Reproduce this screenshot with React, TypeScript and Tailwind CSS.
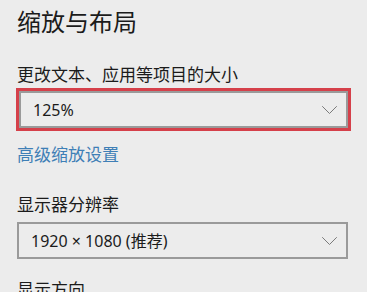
const FONT = "font-['Noto_Sans','Noto_Sans_CJK_SC',sans-serif]";

export default function App() {
  return (
    <div className={`w-[367px] h-[292px] overflow-hidden bg-[#ececec] pl-[17px] pt-[6px] text-[#1b1b1b] ${FONT}`}>
      <h1 className="text-[24px] leading-[32px] font-normal">缩放与布局</h1>

      <p className="mt-[25px] text-[17px] leading-[24px]">更改文本、应用等项目的大小</p>
      <div className="mt-[1px] -ml-[1px] w-[335px] border-[3px] border-[#d5404a]">
        <Select value="125%" />
      </div>

      <a className="mt-[12px] block text-[17px] leading-[24px] text-[#3f7fb6]">高级缩放设置</a>

      <p className="mt-[26px] text-[17px] leading-[24px]">显示器分辨率</p>
      <div className="mt-[5px] w-[331px]">
        <Select value="1920 × 1080 (推荐)" />
      </div>

      <p className="mt-[19px] text-[17px] leading-[24px]">显示方向</p>
    </div>
  );
}

function Select({ value }: { value: string }) {
  return (
    <div className="flex h-[37px] items-center justify-between border-2 border-[#9a9a9a] pl-[12px] pr-[9px]">
      <span className="text-[16px]">{value}</span>
      <ChevronDownIcon className="h-[8px] w-[15px] text-[#7a7a7a]" />
    </div>
  );
}

function ChevronDownIcon({ className }: { className?: string }) {
  return (
    <svg className={className} viewBox="0 0 15 8" fill="none" stroke="currentColor" strokeWidth={1} strokeLinecap="round" strokeLinejoin="round">
      <path d="M0.5 0.5l7 7 7-7" />
    </svg>
  );
}
